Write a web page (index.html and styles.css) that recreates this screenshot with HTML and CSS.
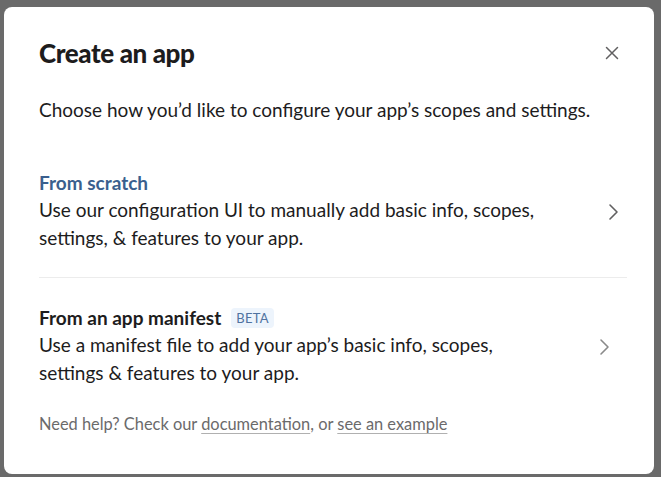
FILE: index.html
```html
<!DOCTYPE html>
<html>
<head>
<meta charset="utf-8">
<link rel="stylesheet" href="styles.css">
</head>
<body>
<div class="modal">
  <div class="header">
    <h1 class="title">Create an app</h1>
    <button class="close" aria-label="Close">
      <svg width="14" height="14" viewBox="0 0 14 14"><path d="M1.5 1.5 L12.5 12.5 M12.5 1.5 L1.5 12.5" stroke="#616061" stroke-width="1.5" fill="none" stroke-linecap="round"/></svg>
    </button>
  </div>
  <p class="intro">Choose how you’d like to configure your app’s scopes and settings.</p>
  <div class="option first">
    <div class="option-text">
      <div class="option-title blue">From scratch</div>
      <div class="option-desc">Use our configuration UI to manually add basic info, scopes,<br>settings, &amp; features to your app.</div>
    </div>
    <svg class="chev" width="12" height="20" viewBox="0 0 12 20"><path d="M3 3 L10 10 L3 17" stroke="#616061" stroke-width="1.6" fill="none" stroke-linecap="round" stroke-linejoin="round"/></svg>
  </div>
  <div class="option second">
    <div class="option-text">
      <div class="option-title">From an app manifest <span class="badge">BETA</span></div>
      <div class="option-desc">Use a manifest file to add your app’s basic info, scopes,<br>settings &amp; features to your app.</div>
    </div>
    <svg class="chev" width="12" height="20" viewBox="0 0 12 20"><path d="M3 3 L10 10 L3 17" stroke="#8a8a8a" stroke-width="1.6" fill="none" stroke-linecap="round" stroke-linejoin="round"/></svg>
  </div>
  <p class="help">Need help? Check our <a href="#">documentation</a>, or <a href="#">see an example</a></p>
</div>
</body>
</html>
```
FILE: styles.css
```css
html, body {
  margin: 0;
  padding: 0;
}
body {
  width: 661px;
  height: 477px;
  background: #6a6a6a;
  font-family: Lato, "Noto Sans", sans-serif;
  overflow: hidden;
  padding: 7px 7px 0 4px;
  box-sizing: border-box;
}
.modal {
  background: #fff;
  border-radius: 8px;
  width: 650px;
  height: 467px;
  box-sizing: border-box;
  padding: 0 27px 0 35px;
  color: #1d1c1d;
}
.header {
  display: flex;
  justify-content: space-between;
  align-items: center;
  padding-top: 31px;
}
.title {
  margin: 0;
  font-size: 26px;
  font-weight: 900;
  letter-spacing: -0.4px;
  line-height: 30px;
}
.close {
  background: none;
  border: 0;
  padding: 0;
  margin-right: 8px;
  display: flex;
}
.intro {
  margin: 28px 0 0;
  font-size: 19px;
  line-height: 28px;
  color: #1d1c1d;
}
.option {
  display: flex;
  align-items: center;
  justify-content: space-between;
}
.option.first {
  margin-top: 46px;
  padding-bottom: 25px;
  padding-right: 8px;
  border-bottom: 1px solid #ececec;
}
.option.second {
  padding-top: 27px;
  padding-right: 17px;
}
.option-title {
  font-size: 19px;
  font-weight: 700;
  line-height: 26px;
  display: flex;
  align-items: center;
}
.option-title.blue {
  color: #3a5f8e;
}
.option-desc {
  font-size: 19px;
  line-height: 28px;
  color: #1d1c1d;
}
.chev {
  margin-top: 2px;
}
.badge {
  font-size: 13px;
  font-weight: 400;
  color: #4f72a0;
  background: #edf4fc;
  border-radius: 4px;
  padding: 2px 5px;
  margin-left: 10px;
  line-height: 16px;
  letter-spacing: 0.3px;
}
.help {
  margin: 27px 0 0;
  font-size: 16.4px;
  line-height: 20px;
  color: #6b6a6b;
}
.help a {
  color: #6b6a6b;
  text-decoration: underline;
  text-decoration-color: #b0b0b0;
  text-underline-offset: 3px;
}
```
